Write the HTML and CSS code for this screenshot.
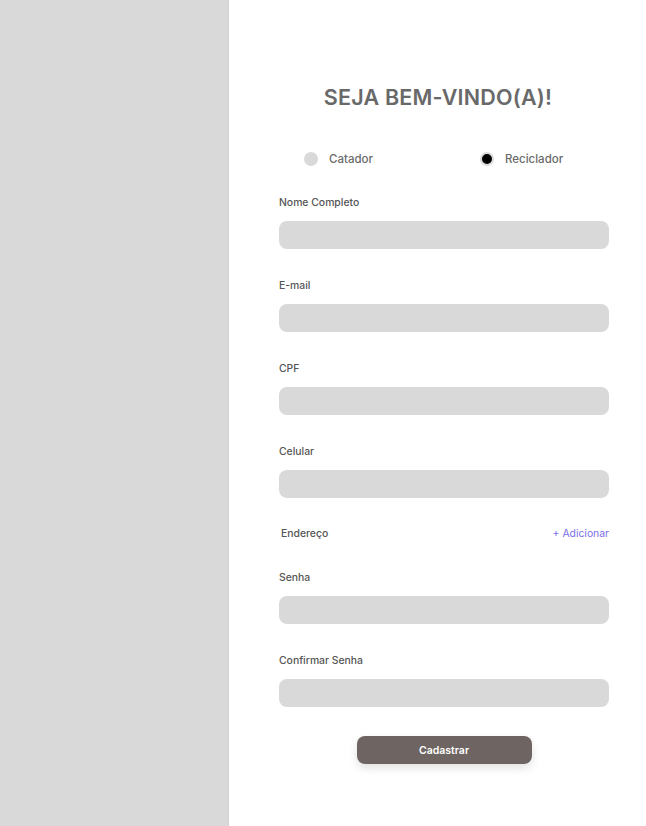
FILE: index.html
```html
<!DOCTYPE html>
<html lang="pt-BR">
<head>
<meta charset="utf-8">
<title>Cadastro</title>
<link rel="stylesheet" href="styles.css">
</head>
<body>
<div class="page">
  <aside class="side"></aside>
  <main class="main">
    <h1 class="title">SEJA BEM-VINDO(A)!</h1>
    <div class="form">
      <div class="radios">
        <label class="radio"><span class="dot"></span><span>Catador</span></label>
        <label class="radio"><span class="dot dot-on"></span><span>Reciclador</span></label>
      </div>
      <div class="field"><div class="label">Nome Completo</div><div class="input"></div></div>
      <div class="field"><div class="label">E-mail</div><div class="input"></div></div>
      <div class="field"><div class="label">CPF</div><div class="input"></div></div>
      <div class="field"><div class="label">Celular</div><div class="input"></div></div>
      <div class="addr"><span class="label addr-label">Endereço</span><span class="add">+ Adicionar</span></div>
      <div class="field"><div class="label">Senha</div><div class="input"></div></div>
      <div class="field"><div class="label">Confirmar Senha</div><div class="input"></div></div>
      <div class="actions"><button class="btn">Cadastrar</button></div>
    </div>
  </main>
</div>
</body>
</html>
```
FILE: styles.css
```css
* { box-sizing: border-box; }
html, body { margin: 0; padding: 0; }
body { font-family: "Inter", "Open Sans", sans-serif; background: #fff; }
.page { display: flex; height: 826px; }
.side { width: 229px; flex: none; background: #d9d9d9; border-right: 1px solid #d2d2d2; }
.main { flex: 1; padding: 82px 0 0 50px; }
.title { margin: 0 0 0 -6px; width: 330px; text-align: center; font-size: 21.5px; font-weight: 600; color: #696969; letter-spacing: 0.2px; line-height: 30px; }
.form { width: 330px; display: flex; flex-direction: column; }
.radios { display: flex; padding-left: 25px; margin-top: 39px; height: 16px; align-items: center; }
.radio { flex: none; display: flex; align-items: center; gap: 11px; font-size: 11.5px; font-weight: 500; color: #6a6a6a; width: 176px; }
.dot { width: 14px; height: 14px; border-radius: 50%; background: #d9d9d9; display: inline-block; }
.dot-on { background: #000; border: 2px solid #dcdcdc; }
.field { display: flex; flex-direction: column; margin-top: 30px; }
.radios + .field { margin-top: 29px; }
.label { font-size: 10.4px; font-weight: 500; color: #555; line-height: 14px; }
.input { margin-top: 11px; height: 28px; background: #d9d9d9; border-radius: 8px; }
.addr { display: flex; justify-content: space-between; align-items: center; margin-top: 29px; height: 14px; }
.addr-label { padding-left: 2px; }
.add { font-size: 10.4px; color: #7a6fe6; line-height: 14px; }
.addr + .field { margin-top: 30px; }
.actions { display: flex; justify-content: center; margin-top: 29px; }
.btn { width: 175px; height: 28px; border: none; border-radius: 8px; background: #6e6462; color: #fff; font-family: inherit; font-size: 10.5px; font-weight: 600; box-shadow: 0 4px 10px rgba(0,0,0,0.12); }
```
